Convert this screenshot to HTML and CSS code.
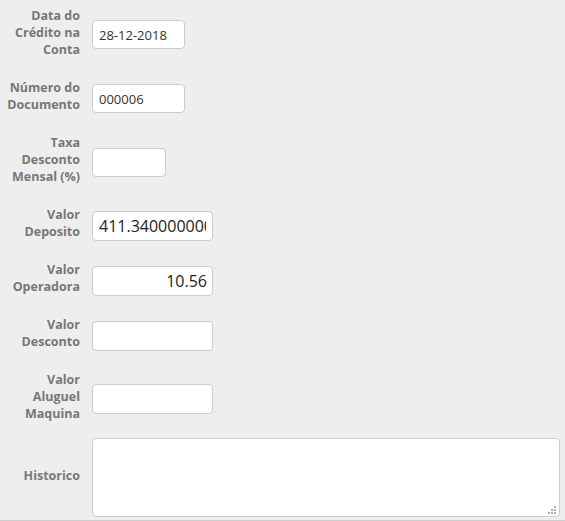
FILE: index.html
```html
<!DOCTYPE html>
<html>
<head>
  <meta charset="utf-8">
  <title>Crédito na Conta</title>
  <link rel="stylesheet" href="styles.css">
</head>
<body>

  <div class="formulario">
    <div class="linha">
      <label for="dataCredito">Data do Crédito na Conta</label>
      <input type="text" id="dataCredito" class="campo curto" value="28-12-2018">
    </div>

    <div class="linha">
      <label for="numDocumento">Número do Documento</label>
      <input type="text" id="numDocumento" class="campo curto" value="000006">
    </div>

    <div class="linha">
      <label for="taxaDesconto">Taxa Desconto Mensal (%)</label>
      <input type="text" id="taxaDesconto" class="campo mini" value="">
    </div>

    <div class="linha">
      <label for="valorDeposito">Valor Deposito</label>
      <input type="text" id="valorDeposito" class="campo valor" value="411.34000000000003">
    </div>

    <div class="linha">
      <label for="valorOperadora">Valor Operadora</label>
      <input type="text" id="valorOperadora" class="campo valor direita" value="10.56">
    </div>

    <div class="linha">
      <label for="valorDesconto">Valor Desconto</label>
      <input type="text" id="valorDesconto" class="campo valor" value="">
    </div>

    <div class="linha">
      <label for="valorAluguel">Valor Aluguel Maquina</label>
      <input type="text" id="valorAluguel" class="campo valor" value="">
    </div>

    <div class="linha">
      <label for="historico">Historico</label>
      <div class="area">
        <textarea id="historico" class="campo historico"></textarea>
        <!-- alça de redimensionar -->
        <svg class="alca" width="8" height="8" viewBox="0 0 8 8">
          <rect x="6" y="0" width="2" height="2"/>
          <rect x="3" y="3" width="2" height="2"/>
          <rect x="6" y="3" width="2" height="2"/>
          <rect x="0" y="6" width="2" height="2"/>
          <rect x="3" y="6" width="2" height="2"/>
          <rect x="6" y="6" width="2" height="2"/>
        </svg>
      </div>
    </div>
  </div>

</body>
</html>
```

FILE: styles.css
```css
body {
  margin: 0;
  background-color: #eeeeee; /* Fondo gris claro */
  font-family: "Open Sans", "DejaVu Sans", sans-serif;
}

.formulario {
  margin-top: -2px;
  padding-right: 5px;
  border-bottom: 1px solid #cfcfcf;
}

.linha {
  display: flex;
  align-items: center;
}

.linha label {
  width: 80px;
  margin-right: 12px;
  padding: 8px 0 13px;
  text-align: right;
  font-size: 12.5px;
  font-weight: bold;
  line-height: 17px;
  color: #777;
}

.linha:first-child label {
  padding-top: 9px;
}

.campo {
  box-sizing: border-box;
  height: 29px;
  margin: 3px 0;
  padding: 0 6px;
  border: 1px solid #cccccc;
  border-radius: 4px;
  background-color: #fff;
  font-family: "Open Sans", "DejaVu Sans", sans-serif;
  font-size: 13px;
  color: #333;
  outline: none;
}

.campo.curto {
  width: 93px;
}

.campo.mini {
  width: 74px;
}

.campo.valor {
  width: 121px;
  height: 30px;
  font-size: 16px;
  color: #222;
}

.campo.direita {
  text-align: right;
  padding-right: 5px;
}

.area {
  position: relative;
  flex: 1;
  display: flex;
}

.campo.historico {
  flex: 1;
  height: 79px;
  padding: 6px;
  resize: none;
}

.alca {
  position: absolute;
  right: 4px;
  bottom: 6px;
  fill: #b0b0b0;
}
```
